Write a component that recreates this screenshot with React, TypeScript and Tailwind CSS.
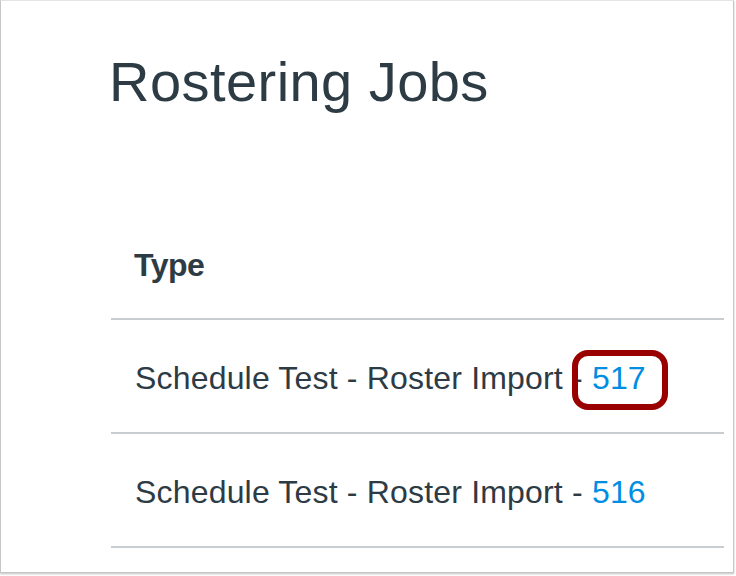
const rows = [
  { label: "Schedule Test - Roster Import - ", id: "517", marked: true },
  { label: "Schedule Test - Roster Import - ", id: "516", marked: false },
];

export default function App() {
  return (
    <div className="h-[576px] w-[736px] overflow-hidden bg-white" style={{ fontFamily: '"Liberation Sans", Arial, sans-serif' }}>
      <div className="h-[573px] w-[734px] border border-[#c6c6c6] border-t-[#e4e4e4] bg-white shadow-[0_1px_2px_rgba(0,0,0,0.25)]">
        <div className="pl-[108px] pr-[10px] pt-[49px] text-[#2d3b45]">
          <h1 className="text-[56px] leading-[64px] font-normal tracking-[0.45px]">Rostering Jobs</h1>
          <table className="ml-[2px] mt-[131px] w-[613px] border-collapse text-left">
            <thead>
              <tr className="border-b-2 border-[#c7cdd1]">
                <th className="pb-[33px] pl-[23px] text-[32px] leading-[40px] font-bold tracking-[-0.5px]">Type</th>
              </tr>
            </thead>
            <tbody>
              {rows.map((row) => (
                <tr key={row.id} className="border-b-2 border-[#c7cdd1]">
                  <td className="pb-[34px] pl-[24px] pt-[38px] text-[32px] leading-[40px] tracking-[0.18px]">
                    {row.label}
                    <span className="relative text-[#008ee2]">
                      {row.id}
                      {row.marked ? (
                        <span className="absolute -left-[20px] -top-[10px] h-[60px] w-[96px] rounded-[16px] border-[6px] border-[#990000]" />
                      ) : null}
                    </span>
                  </td>
                </tr>
              ))}
            </tbody>
          </table>
        </div>
      </div>
    </div>
  );
}
